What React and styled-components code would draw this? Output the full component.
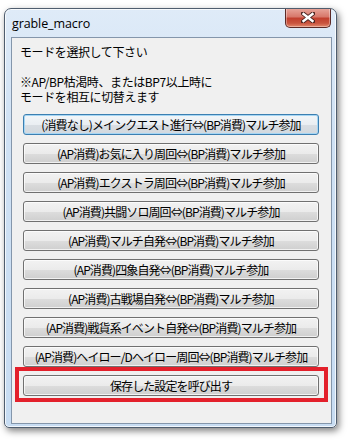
import React from 'react';
import styled, { createGlobalStyle } from 'styled-components';

const Global = createGlobalStyle`
  body {
    margin: 0;
    background: #ffffff;
    font-family: "Noto Sans CJK JP", "Noto Sans", sans-serif;
  }
`;

const Page = styled.div`
  width: 348px;
  height: 444px;
  padding: 8px 0 0 4px;
  box-sizing: border-box;
  overflow: hidden;
`;

const Window = styled.div`
  width: 333px;
  height: 420px;
  box-sizing: border-box;
  border: 1px solid #4f5d6e;
  border-radius: 7px 7px 5px 5px;
  background: linear-gradient(180deg, #dfebf8 0%, #cfe1f4 30%, #c7dcf2 100%);
  box-shadow: 2px 3px 7px rgba(0, 0, 0, 0.5), inset 0 0 0 1px rgba(255, 255, 255, 0.75);
  display: flex;
  flex-direction: column;
  padding: 0 4px 3px 6px;
  overflow: hidden;
`;

const TitleBar = styled.div`
  height: 28px;
  flex: none;
  display: flex;
  align-items: flex-start;
  justify-content: space-between;
`;

const Title = styled.span`
  font-family: "Open Sans", "Noto Sans", sans-serif;
  font-size: 12.5px;
  color: #000;
  margin-top: 6px;
  margin-left: 1px;
  letter-spacing: -0.1px;
`;

const CloseButton = styled.div`
  width: 46px;
  height: 20px;
  margin-top: -1px;
  margin-right: 1px;
  box-sizing: border-box;
  border: 1px solid #5c2a26;
  border-top: none;
  border-radius: 0 0 5px 5px;
  background: linear-gradient(180deg, #e9a89e 0%, #d8796c 45%, #c2402f 55%, #c9553f 80%, #e48a6e 100%);
  box-shadow: inset 0 0 0 1px rgba(255, 255, 255, 0.35);
  display: flex;
  align-items: center;
  justify-content: center;
`;

const Client = styled.div`
  flex: 1;
  min-height: 0;
  border: 1px solid #8496ab;
  background: #f0f0f0;
  padding: 6px 0 0 8px;
  display: flex;
  flex-direction: column;
`;

const Label = styled.div`
  font-size: 12px;
  line-height: 15px;
  color: #000;
  margin-bottom: ${p => p.gap || 0}px;
  letter-spacing: -0.4px;
`;

const ButtonList = styled.div`
  display: flex;
  flex-direction: column;
  gap: 8px;
  margin-top: 10px;
  margin-left: 3px;
`;

const Button = styled.div`
  width: 296px;
  height: 21px;
  box-sizing: border-box;
  border: 1px solid ${p => (p.focused ? '#3c7fb1' : '#707070')};
  border-radius: 3px;
  background: ${p =>
    p.focused
      ? 'linear-gradient(180deg, #f2f6f9 0%, #eaeef2 50%, #d9dee3 51%, #d2d8de 100%)'
      : 'linear-gradient(180deg, #f2f2f2 0%, #ebebeb 50%, #dddddd 51%, #cfcfcf 100%)'};
  box-shadow: inset 0 0 0 1px ${p => (p.focused ? '#a6d6f4' : 'rgba(255,255,255,0.7)')};
  display: flex;
  align-items: center;
  justify-content: center;
  font-size: 12px;
  line-height: 15px;
  color: #000;
  letter-spacing: -0.9px;
  white-space: nowrap;
`;

const Highlight = styled.div`
  width: 296px;
  border: 4px solid #e3202b;
  padding: 4px 5px 2px 4px;
  margin: -8px 0 0 -8px;
`;

const modes = [
  '(消費なし)メインクエスト進行⇔(BP消費)マルチ参加',
  '(AP消費)お気に入り周回⇔(BP消費)マルチ参加',
  '(AP消費)エクストラ周回⇔(BP消費)マルチ参加',
  '(AP消費)共闘ソロ周回⇔(BP消費)マルチ参加',
  '(AP消費)マルチ自発⇔(BP消費)マルチ参加',
  '(AP消費)四象自発⇔(BP消費)マルチ参加',
  '(AP消費)古戦場自発⇔(BP消費)マルチ参加',
  '(AP消費)戦貨系イベント自発⇔(BP消費)マルチ参加',
  '(AP消費)ヘイロー/Dヘイロー周回⇔(BP消費)マルチ参加',
];

export default function App() {
  return (
    <Page>
      <Global />
      <Window>
        <TitleBar>
          <Title>grable_macro</Title>
          <CloseButton>
            <svg width="14" height="11" viewBox="0 0 14 11">
              <path d="M2 1.5 L12 9.5 M12 1.5 L2 9.5" stroke="#4a2420" strokeWidth="4.2" strokeLinecap="square" />
              <path d="M2.5 2 L11.5 9 M11.5 2 L2.5 9" stroke="#ffffff" strokeWidth="2.4" strokeLinecap="square" />
            </svg>
          </CloseButton>
        </TitleBar>
        <Client>
          <Label gap={15}>モードを選択して下さい</Label>
          <Label>
            ※AP/BP枯渇時、またはBP7以上時に
            <br />
            モードを相互に切替えます
          </Label>
          <ButtonList>
            {modes.map((m, i) => (
              <Button key={i} focused={i === 0}>{m}</Button>
            ))}
            <Highlight>
              <Button>保存した設定を呼び出す</Button>
            </Highlight>
          </ButtonList>
        </Client>
      </Window>
    </Page>
  );
}
